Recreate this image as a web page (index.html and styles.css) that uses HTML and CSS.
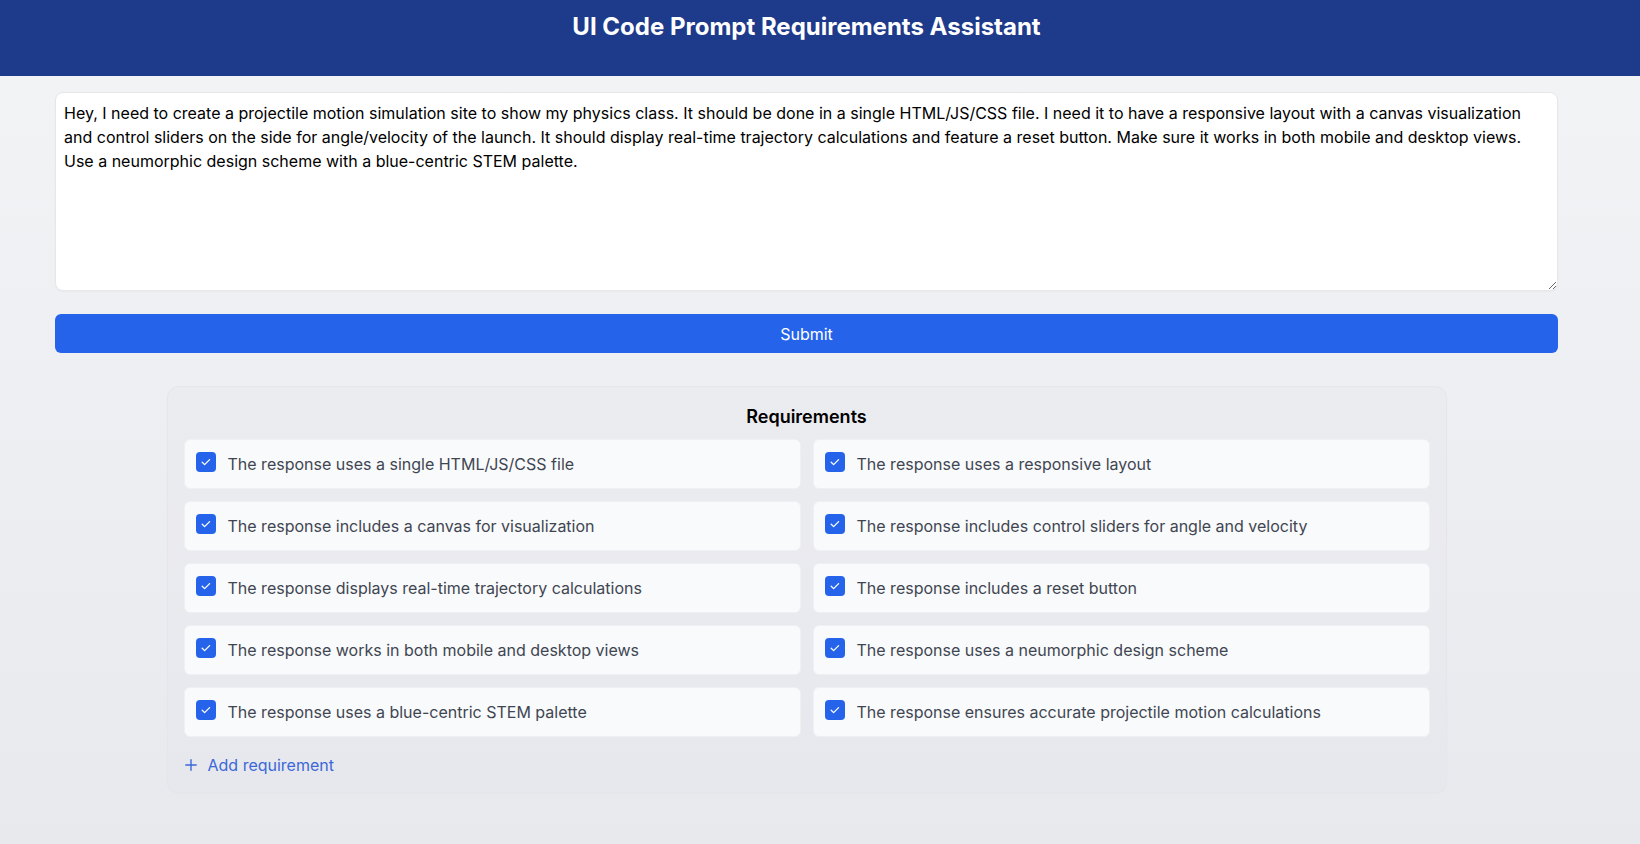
FILE: index.html
```html
<!DOCTYPE html>
<html lang="en">
<head>
<meta charset="utf-8">
<title>UI Code Prompt Requirements Assistant</title>
<link rel="stylesheet" href="styles.css">
</head>
<body>
<header class="topbar">
  <div class="topbar-inner">
    <h1 class="title">UI Code Prompt Requirements Assistant</h1>
  </div>
</header>
<main class="page">
  <textarea class="prompt">Hey, I need to create a projectile motion simulation site to show my physics class. It should be done in a single HTML/JS/CSS file. I need it to have a responsive layout with a canvas visualization and control sliders on the side for angle/velocity of the launch. It should display real-time trajectory calculations and feature a reset button. Make sure it works in both mobile and desktop views. Use a neumorphic design scheme with a blue-centric STEM palette.</textarea>
  <button class="submit" type="button">Submit</button>

  <section class="panel">
    <h2 class="panel-title">Requirements</h2>
    <div class="req-grid">
      <div class="req"><span class="check"><svg viewBox="0 0 20 20" width="20" height="20"><polyline points="6.2,10.3 8.6,12.6 13.6,7.6" fill="none" stroke="#fff" stroke-width="1.3" stroke-linecap="round" stroke-linejoin="round"/></svg></span><span class="req-text">The response uses a single HTML/JS/CSS file</span></div>
      <div class="req"><span class="check"><svg viewBox="0 0 20 20" width="20" height="20"><polyline points="6.2,10.3 8.6,12.6 13.6,7.6" fill="none" stroke="#fff" stroke-width="1.3" stroke-linecap="round" stroke-linejoin="round"/></svg></span><span class="req-text">The response uses a responsive layout</span></div>
      <div class="req"><span class="check"><svg viewBox="0 0 20 20" width="20" height="20"><polyline points="6.2,10.3 8.6,12.6 13.6,7.6" fill="none" stroke="#fff" stroke-width="1.3" stroke-linecap="round" stroke-linejoin="round"/></svg></span><span class="req-text">The response includes a canvas for visualization</span></div>
      <div class="req"><span class="check"><svg viewBox="0 0 20 20" width="20" height="20"><polyline points="6.2,10.3 8.6,12.6 13.6,7.6" fill="none" stroke="#fff" stroke-width="1.3" stroke-linecap="round" stroke-linejoin="round"/></svg></span><span class="req-text">The response includes control sliders for angle and velocity</span></div>
      <div class="req"><span class="check"><svg viewBox="0 0 20 20" width="20" height="20"><polyline points="6.2,10.3 8.6,12.6 13.6,7.6" fill="none" stroke="#fff" stroke-width="1.3" stroke-linecap="round" stroke-linejoin="round"/></svg></span><span class="req-text">The response displays real-time trajectory calculations</span></div>
      <div class="req"><span class="check"><svg viewBox="0 0 20 20" width="20" height="20"><polyline points="6.2,10.3 8.6,12.6 13.6,7.6" fill="none" stroke="#fff" stroke-width="1.3" stroke-linecap="round" stroke-linejoin="round"/></svg></span><span class="req-text">The response includes a reset button</span></div>
      <div class="req"><span class="check"><svg viewBox="0 0 20 20" width="20" height="20"><polyline points="6.2,10.3 8.6,12.6 13.6,7.6" fill="none" stroke="#fff" stroke-width="1.3" stroke-linecap="round" stroke-linejoin="round"/></svg></span><span class="req-text">The response works in both mobile and desktop views</span></div>
      <div class="req"><span class="check"><svg viewBox="0 0 20 20" width="20" height="20"><polyline points="6.2,10.3 8.6,12.6 13.6,7.6" fill="none" stroke="#fff" stroke-width="1.3" stroke-linecap="round" stroke-linejoin="round"/></svg></span><span class="req-text">The response uses a neumorphic design scheme</span></div>
      <div class="req"><span class="check"><svg viewBox="0 0 20 20" width="20" height="20"><polyline points="6.2,10.3 8.6,12.6 13.6,7.6" fill="none" stroke="#fff" stroke-width="1.3" stroke-linecap="round" stroke-linejoin="round"/></svg></span><span class="req-text">The response uses a blue-centric STEM palette</span></div>
      <div class="req"><span class="check"><svg viewBox="0 0 20 20" width="20" height="20"><polyline points="6.2,10.3 8.6,12.6 13.6,7.6" fill="none" stroke="#fff" stroke-width="1.3" stroke-linecap="round" stroke-linejoin="round"/></svg></span><span class="req-text">The response ensures accurate projectile motion calculations</span></div>
    </div>
    <button class="add" type="button"><svg class="plus" viewBox="0 0 12 12" width="12" height="12"><path d="M6 0.8V11.2M0.8 6H11.2" stroke="currentColor" stroke-width="1.4" stroke-linecap="round" fill="none"/></svg><span>Add requirement</span></button>
  </section>
</main>
</body>
</html>
```

FILE: styles.css
```css
* { box-sizing: border-box; }

html, body {
  margin: 0;
  padding: 0;
}

body {
  font-family: Inter, "Liberation Sans", sans-serif;
  background: linear-gradient(180deg, #f3f4f6 0%, #e8e9ed 100%);
  min-height: 100vh;
  color: #111827;
}

.topbar {
  background: #1e3a8a;
  height: 76px;
}

.topbar-inner {
  width: 1613px;
  padding-top: 11px;
}

.title {
  margin: 0;
  text-align: center;
  color: #ffffff;
  font-size: 24px;
  line-height: 32px;
  font-weight: 700;
}

.page {
  width: 1613px;
  padding: 16px 55px 0;
}

.prompt {
  display: block;
  width: 100%;
  height: 199px;
  padding: 8px;
  border: 1px solid #e5e7eb;
  border-radius: 8px;
  background: #ffffff;
  font-family: Inter, "Liberation Sans", sans-serif;
  font-size: 16px;
  line-height: 24px;
  color: #000000;
  resize: vertical;
  box-shadow: 0 1px 2px rgba(0, 0, 0, 0.03);
  outline: none;
}

.submit {
  display: block;
  width: 100%;
  height: 39px;
  margin-top: 23px;
  border: none;
  border-radius: 6px;
  background: #2563eb;
  color: #ffffff;
  font-family: Inter, "Liberation Sans", sans-serif;
  font-size: 16px;
  line-height: 24px;
}

.panel {
  width: 1280px;
  margin: 33px auto 0;
  padding: 16px 16px 15px;
  border: 1px solid #e4e6ea;
  border-radius: 12px;
  background: rgba(226, 229, 235, 0.25);
  box-shadow: 0 1px 2px rgba(0, 0, 0, 0.02);
}

.panel-title {
  margin: 0 0 8px;
  text-align: center;
  font-size: 18px;
  line-height: 28px;
  font-weight: 600;
  color: #000000;
}

.req-grid {
  display: grid;
  grid-template-columns: 1fr 1fr;
  column-gap: 12px;
  row-gap: 12px;
}

.req {
  display: flex;
  align-items: flex-start;
  gap: 12px;
  height: 50px;
  padding: 12px 11px 11px;
  background: #f9fafb;
  border: 1px solid #eef0f3;
  border-radius: 6px;
}

.check {
  flex: none;
  width: 20px;
  height: 20px;
  border-radius: 4px;
  background: #2563eb;
  display: flex;
}

.req-text {
  font-size: 16px;
  line-height: 24px;
  color: #3f4652;
}

.add {
  display: flex;
  align-items: center;
  gap: 11px;
  margin-top: 16px;
  padding: 0 0 0 1px;
  border: none;
  background: none;
  color: #3b68d8;
  font-family: Inter, "Liberation Sans", sans-serif;
  font-size: 16px;
  line-height: 24px;
}

.plus {
  flex: none;
}
```
